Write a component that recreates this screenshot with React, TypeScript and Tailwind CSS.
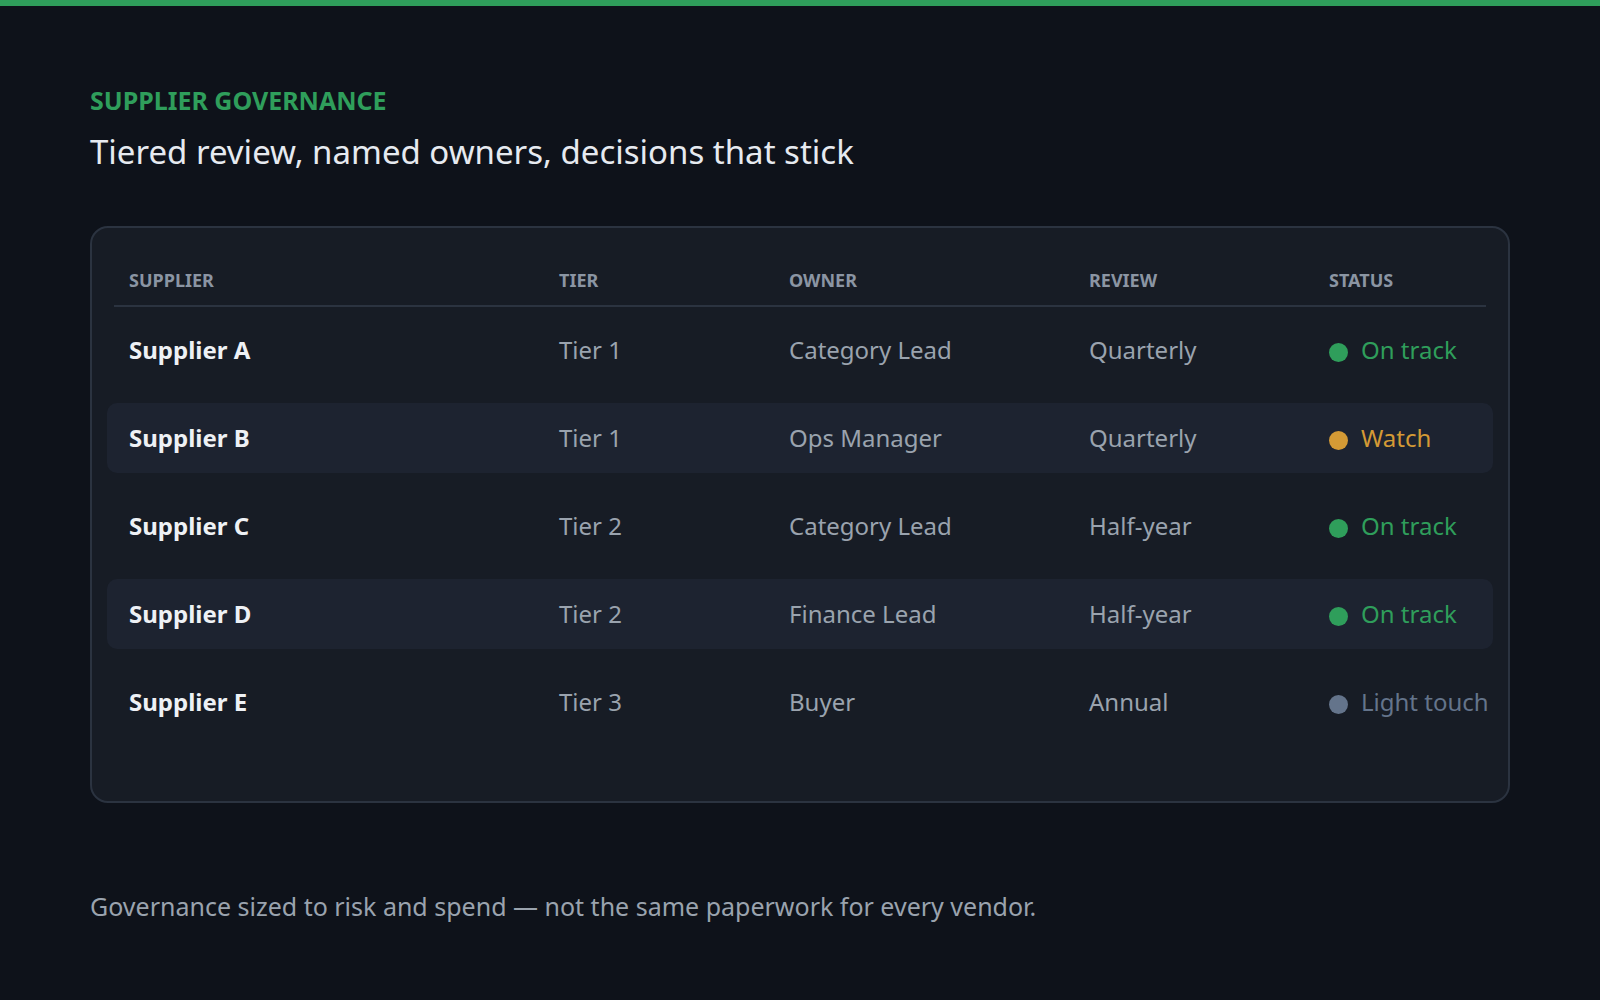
const ROWS = [
  { name: "Supplier A", tier: "Tier 1", owner: "Category Lead", review: "Quarterly", status: "On track", tone: "green" },
  { name: "Supplier B", tier: "Tier 1", owner: "Ops Manager", review: "Quarterly", status: "Watch", tone: "amber" },
  { name: "Supplier C", tier: "Tier 2", owner: "Category Lead", review: "Half-year", status: "On track", tone: "green" },
  { name: "Supplier D", tier: "Tier 2", owner: "Finance Lead", review: "Half-year", status: "On track", tone: "green" },
  { name: "Supplier E", tier: "Tier 3", owner: "Buyer", review: "Annual", status: "Light touch", tone: "gray" },
];

const TONE: Record<string, { dot: string; text: string }> = {
  green: { dot: "bg-[#2f9e5b]", text: "text-[#2f9e5b]" },
  amber: { dot: "bg-[#d49a35]", text: "text-[#d49a35]" },
  gray: { dot: "bg-[#64748b]", text: "text-[#64748b]" },
};

const COLS = "grid grid-cols-[430px_230px_300px_240px_1fr] items-center";

export default function App() {
  return (
    <div className="min-h-[1000px] bg-[#0e121a] font-['Liberation_Sans',Arial,sans-serif]">
      <div className="h-[6px] bg-[#2f9e5b]" />
      <div className="px-[90px] pt-[82px]">
        <div className="text-[25px] font-bold text-[#2f9e5b] leading-none">SUPPLIER GOVERNANCE</div>
        <h1 className="mt-[22px] text-[33px] text-[#e6eaf0] leading-none">Tiered review, named owners, decisions that stick</h1>

        <div className="mt-[58px] h-[577px] rounded-[18px] border-2 border-[#2b3340] bg-[#171c25] px-[15px] pt-[38px]">
          <div className={`${COLS} mx-[7px] h-[41px] border-b-2 border-[#2b3340] pl-[15px] pb-[10px] text-[18px] font-bold text-[#8b95a3]`}>
            <div>SUPPLIER</div>
            <div>TIER</div>
            <div>OWNER</div>
            <div>REVIEW</div>
            <div>STATUS</div>
          </div>
          <div className="mt-[8px] flex flex-col gap-[18px]">
            {ROWS.map((r, i) => (
              <div
                key={r.name}
                className={`${COLS} h-[70px] rounded-[10px] px-[22px] text-[24px] text-[#9aa3ae] ${i % 2 === 1 ? "bg-[#1d2330]" : ""}`}
              >
                <div className="font-bold text-[#eef1f5]">{r.name}</div>
                <div>{r.tier}</div>
                <div>{r.owner}</div>
                <div>{r.review}</div>
                <div className={`flex items-center gap-[13px] ${TONE[r.tone].text}`}>
                  <span className={`mt-[4px] h-[19px] w-[19px] shrink-0 rounded-full ${TONE[r.tone].dot}`} />
                  <span className="whitespace-nowrap">{r.status}</span>
                </div>
              </div>
            ))}
          </div>
        </div>

        <p className="mt-[85px] text-[25px] text-[#9aa3ae]">
          Governance sized to risk and spend — not the same paperwork for every vendor.
        </p>
      </div>
    </div>
  );
}
